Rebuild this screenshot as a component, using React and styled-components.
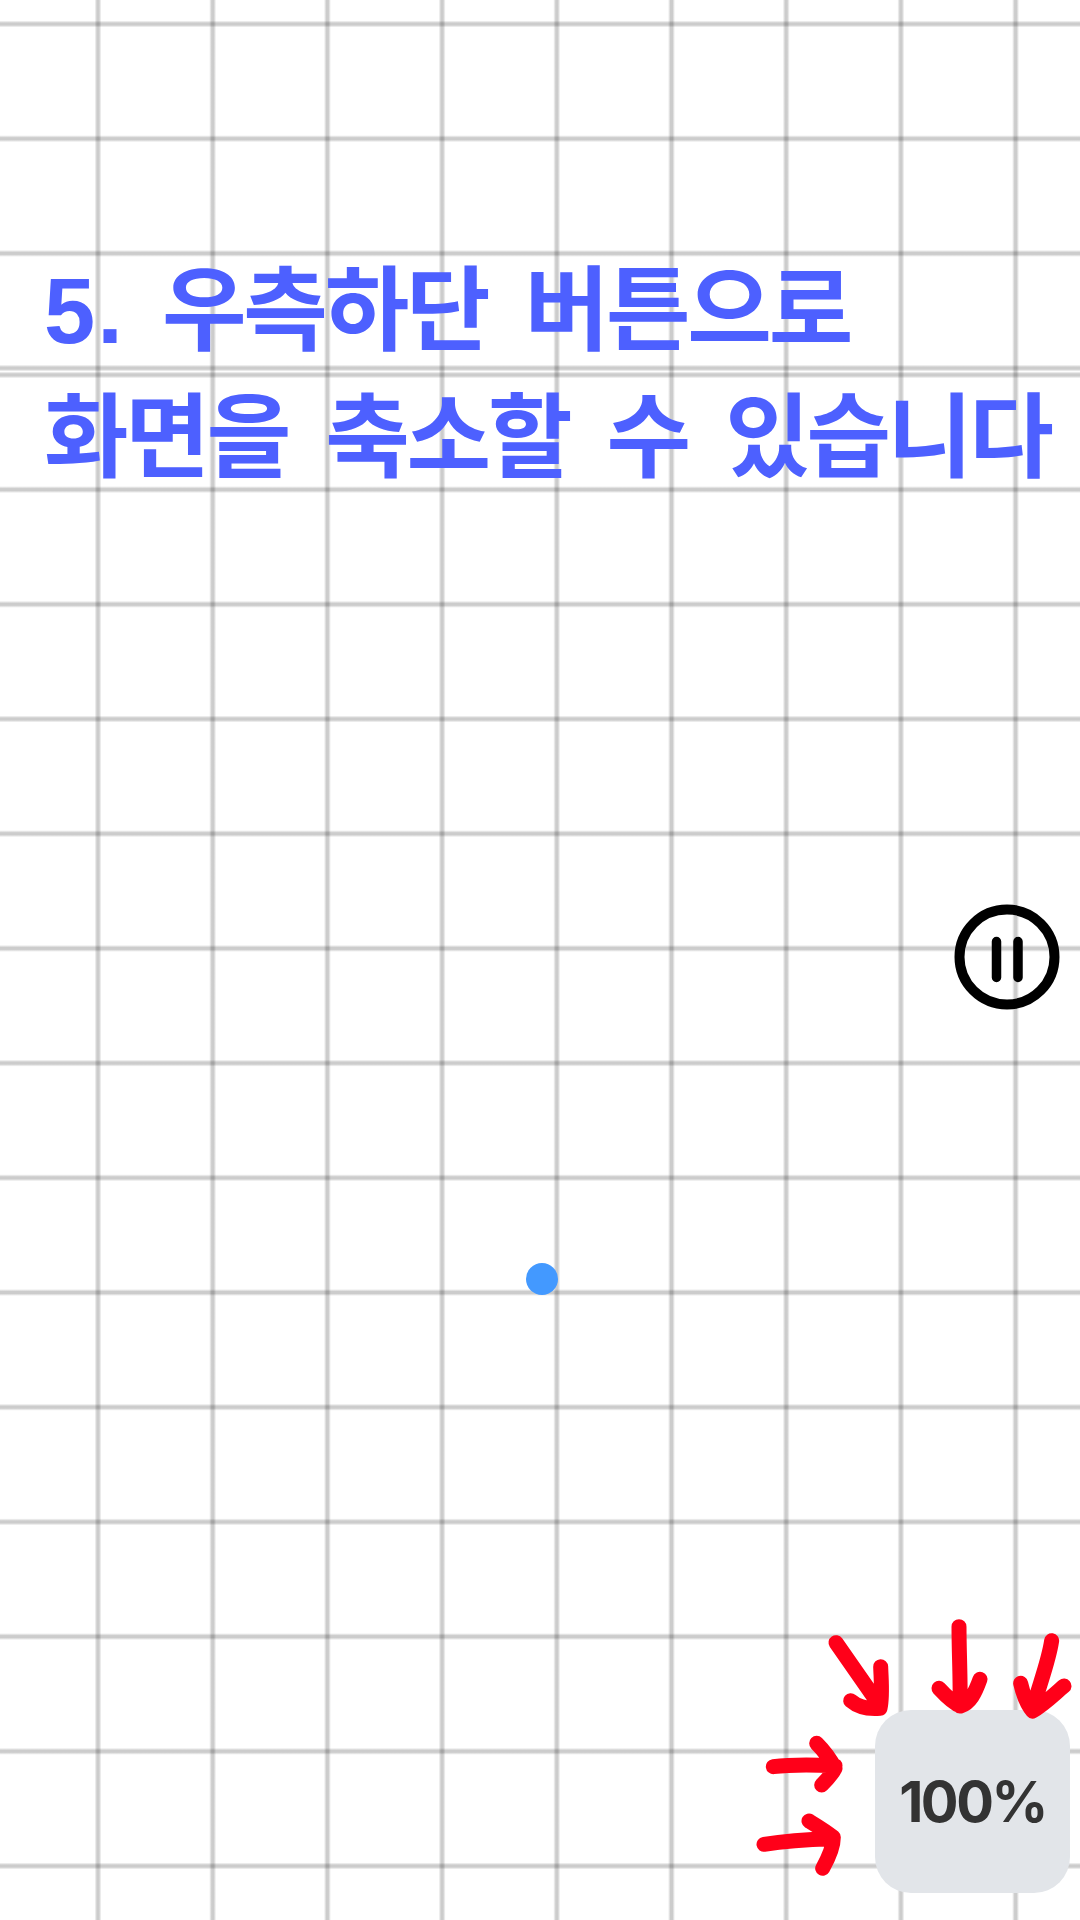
import React from 'react';
import styled, { createGlobalStyle } from 'styled-components';

const GlobalStyle = createGlobalStyle`
    html, body {
        margin: 0;
        padding: 0;
        background: #fff;
    }
`;

const STEP = 114.7;
const LINE = 'rgba(0,0,0,0.2)';

// one soft grid line per step, the gradient repeats from the offset
const gridLines = (dir, offset) => `repeating-linear-gradient(${dir},
    transparent ${offset - 3.5}px,
    ${LINE} ${offset - 1}px,
    ${LINE} ${offset + 1}px,
    transparent ${offset + 3.5}px,
    transparent ${offset - 3.5 + STEP}px)`;

const Page = styled.div`
    position: relative;
    width: 1080px;
    height: 1920px;
    overflow: hidden;
    background: #fff;
`;

const GridBand = styled.div`
    height: ${props => props.$height}px;
    background-image: ${props => gridLines('90deg', 98)}, ${props => gridLines('180deg', props.$lineY)};
`;

/* everything that sits on top of the grid */
const Overlay = styled.div`
    position: absolute;
    inset: 0;
    display: flex;
    flex-direction: column;
    padding: 248px 10px 27px;
`;

const Heading = styled.h1`
    margin: 0;
    padding-left: 34px;
    font-family: "Liberation Sans", "Noto Sans CJK KR", sans-serif;
    font-size: 92px;
    font-weight: 700;
    line-height: 127px;
    letter-spacing: -3.3px;
    word-spacing: 15px;
    color: #4d60ff;
    white-space: nowrap;
`;

const HeadingLine = styled.span`
    display: block;
`;

const StepNumber = styled.span`
    letter-spacing: 2px;
`;

const PauseButton = styled.svg`
    display: block;
    align-self: flex-end;
    margin: 402px 10px 0 0;
    width: 106px;
    height: 106px;
`;

const Dot = styled.div`
    align-self: center;
    margin: 253px 0 0 3px;
    width: 32px;
    height: 32px;
    border-radius: 50%;
    background: #4399ff;
`;

const Corner = styled.div`
    position: relative;
    align-self: flex-end;
    margin-top: auto;
`;

const ZoomButton = styled.div`
    width: 195px;
    height: 183px;
    display: flex;
    align-items: center;
    justify-content: center;
    border-radius: 36px;
    background: #e2e5e9;
    font-family: Inter, "Liberation Sans", sans-serif;
    font-size: 56px;
    font-weight: 700;
    letter-spacing: -2.5px;
    color: #333;
`;

const Arrows = styled.svg`
    position: absolute;
    top: -110px;
    left: -135px;
    width: 340px;
    height: 320px;
    fill: none;
    stroke: #ff0019;
    stroke-width: 45;
    stroke-linecap: round;
    stroke-linejoin: round;
`;

export default function App() {
    return (
        <Page>
            <GlobalStyle />
            <GridBand $height={371} $lineY={24} />
            <GridBand $height={1549} $lineY={3.9} />
            <Overlay>
                <Heading>
                    <HeadingLine><StepNumber>5.</StepNumber> 우측하단 버튼으로</HeadingLine>
                    <HeadingLine>화면을 축소할 수 있습니다</HeadingLine>
                </Heading>
                <PauseButton viewBox="0 0 106 106">
                    <circle cx="53" cy="53" r="47.5" fill="none" stroke="#000" strokeWidth="10" />
                    <path d="M42.5 37.5V73.5M64 37.5V73.5" fill="none" stroke="#000" strokeWidth="9.5" strokeLinecap="round" />
                </PauseButton>
                <Dot />
                <Corner>
                    <ZoomButton>100%</ZoomButton>
                    <Arrows viewBox="0 0 1020 960">
                        <path d="M288 128L415 310M422 200C424 250 428 290 420 325C385 328 355 322 332 302" />
                        <path d="M657 80C657 160 662 240 660 318M597 265C620 290 640 310 662 318C690 310 705 280 720 238" />
                        <path d="M935 122C925 190 895 260 878 330M842 250C850 285 858 310 878 333C910 315 940 285 972 258" />
                        <path d="M100 500C160 492 220 494 285 497M230 430C250 450 270 475 285 505C275 525 260 540 245 555" />
                        <path d="M72 733C140 722 210 718 275 716M207 663C235 680 260 695 280 712C280 745 265 775 248 805" />
                    </Arrows>
                </Corner>
            </Overlay>
        </Page>
    );
}
